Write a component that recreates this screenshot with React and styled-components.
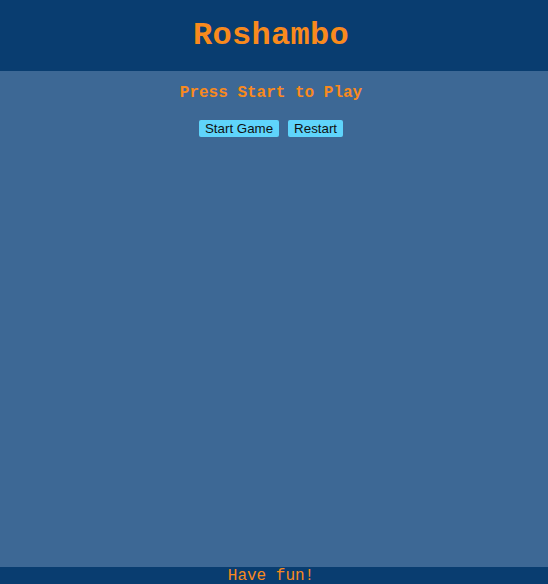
import React from "react";
import styled, { createGlobalStyle } from "styled-components";

const GlobalStyle = createGlobalStyle`
  html, body {
    margin: 0;
    padding: 0;
  }
  body {
    background-color: #3d6895;
  }
`;

const App = () => {
  return (
    <>
      <GlobalStyle />
      <Page>
        <Header>
          <Title>Roshambo</Title>
        </Header>
        <Main>
          <Status>Press Start to Play</Status>
          <Controls>
            <GameButton>Start Game</GameButton>
            <GameButton>Restart</GameButton>
          </Controls>
        </Main>
        <Footer>Have fun!</Footer>
      </Page>
    </>
  );
};

export default App;

const Page = styled.div`
  display: flex;
  flex-direction: column;
  min-height: 100vh;
  background-color: #3d6895;
  font-family: "Liberation Mono", "DejaVu Sans Mono", monospace;
  color: #f98a1d;
`;

const Header = styled.header`
  display: flex;
  align-items: center;
  justify-content: center;
  height: 71px;
  padding-right: 6px;
  background-color: #093d70;
`;

const Title = styled.h1`
  margin: 0;
  font-size: 32px;
  font-weight: bold;
  letter-spacing: 0.3px;
`;

const Main = styled.main`
  flex: 1;
  display: flex;
  flex-direction: column;
  align-items: center;
  padding-top: 13px;
  padding-right: 6px;
`;

const Status = styled.h2`
  margin: 0;
  font-size: 16px;
  font-weight: bold;
  line-height: 19px;
`;

const Controls = styled.div`
  display: flex;
  gap: 9px;
  margin-top: 17px;
`;

const GameButton = styled.button`
  height: 17px;
  padding: 0 6px;
  border: none;
  border-radius: 2px;
  background-color: #5fd4fb;
  color: #111;
  font-family: "Liberation Sans", Arial, sans-serif;
  font-size: 13.33px;
  line-height: 17px;
  cursor: pointer;
`;

const Footer = styled.footer`
  height: 17px;
  padding: 1px 6px 0 0;
  background-color: #093d70;
  text-align: center;
  font-size: 16px;
  line-height: 17px;
  overflow: hidden;
  box-sizing: border-box;
`;
